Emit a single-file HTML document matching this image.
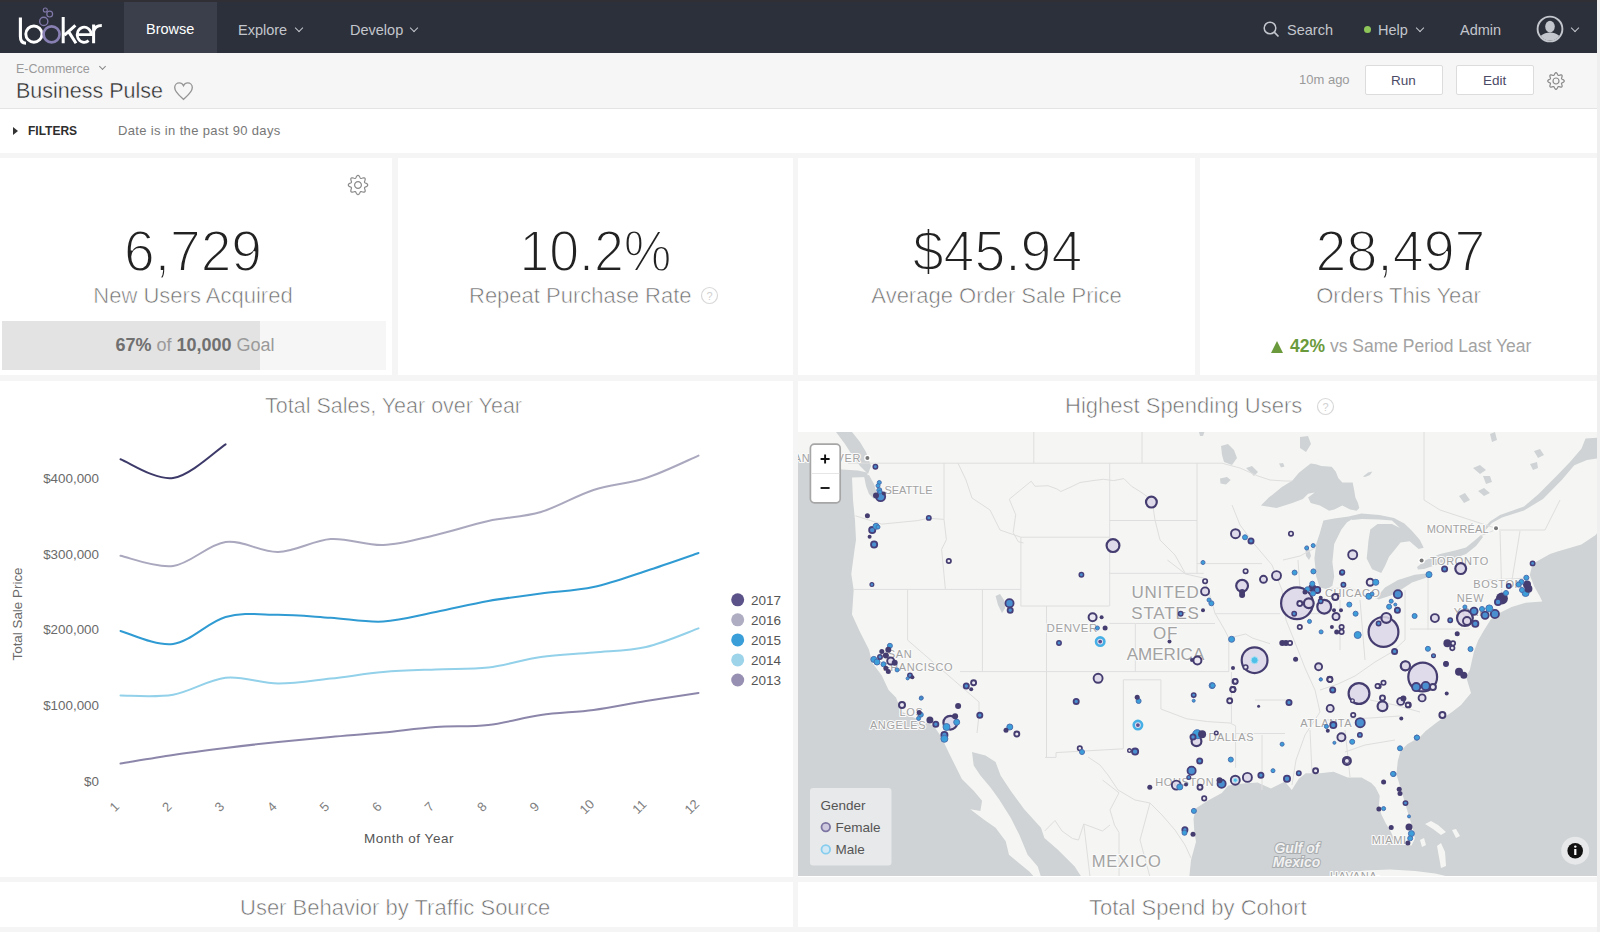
<!DOCTYPE html>
<html><head><meta charset="utf-8">
<style>
*{margin:0;padding:0;box-sizing:border-box}
html,body{width:1600px;height:932px;overflow:hidden;background:#f5f5f5;font-family:"Liberation Sans",sans-serif}
.a{position:absolute;white-space:nowrap}
#hdr{position:absolute;left:0;top:0;width:1597px;height:53px;background:#2c303b}
#rstrip{position:absolute;left:1597px;top:0;width:3px;height:932px;background:#efefef}
#tab{position:absolute;left:124px;top:2px;width:93px;height:51px;background:#3a3f4b}
.nav{color:#c3c6cc;font-size:14.5px}
.chev{position:absolute;width:6px;height:6px;border-right:1.8px solid currentColor;border-bottom:1.8px solid currentColor;transform:rotate(45deg)}
#sub{position:absolute;left:0;top:53px;width:1597px;height:56px;background:#f6f6f7;border-bottom:1px solid #e4e4e4}
#flt{position:absolute;left:0;top:109px;width:1597px;height:44px;background:#fff}
.tile{position:absolute;background:#fff}
.btn{position:absolute;background:#fff;border:1px solid #dcdcdc;border-radius:2px}
.num{color:#222;-webkit-text-stroke:1.8px #fff;font-size:58px;transform-origin:center}
.lbl{color:#707070;font-size:22px;-webkit-text-stroke:0.6px #fff}
.ttl{color:#6c6c6c;font-size:22px;-webkit-text-stroke:0.6px #fff}
</style></head><body>
<div id="hdr"></div>
<div class="a" style="left:0;top:0;width:1597px;height:2px;background:#312f36"></div>
<div id="tab"></div>
<div id="rstrip"></div>
<!-- logo -->
<svg class="a" style="left:0;top:0" width="115" height="53" viewBox="0 0 115 53">
  <g fill="none" stroke-linecap="butt">
  <circle cx="45.3" cy="10" r="2" stroke="#8078a8" stroke-width="1.1"/>
  <circle cx="49.7" cy="14.1" r="2.9" stroke="#8078a8" stroke-width="1.2"/>
  <circle cx="43.75" cy="21.4" r="4.1" stroke="#8078a8" stroke-width="1.4"/>
  <path d="M20.4 17.6 V36.5 C20.4 41 22.4 43.2 26 43.2" stroke="#fff" stroke-width="3.1"/>
  <circle cx="33.9" cy="34.1" r="8.1" stroke="#fff" stroke-width="2.9"/>
  <circle cx="51.6" cy="34.3" r="8.0" stroke="#8880b2" stroke-width="2.7"/>
  <path d="M63.2 16.9 V43.3 M75.4 25.4 L64.5 35.2 M68.6 31.6 L76 43.3" stroke="#fff" stroke-width="3"/>
  <path d="M77.2 34.6 H91.2 A7 7.6 0 1 0 88.6 40.6" stroke="#fff" stroke-width="2.8"/>
  <path d="M93.6 24.6 V43.3 M93.6 31.5 C94.5 27 97 25.5 101.8 25.5" stroke="#fff" stroke-width="3"/>
  </g>
</svg>
<div id="browse" class="a nav" style="left:146px;top:21px;color:#fff">Browse</div>
<div id="explore" class="a nav" style="left:238px;top:21.5px">Explore</div>
<div class="chev" style="left:296px;top:25px;color:#c3c6cc"></div>
<div id="develop" class="a nav" style="left:350px;top:21.5px">Develop</div>
<div class="chev" style="left:411px;top:25px;color:#c3c6cc"></div>
<svg class="a" style="left:1262px;top:20px" width="20" height="20" viewBox="0 0 20 20"><circle cx="8" cy="8" r="5.8" fill="none" stroke="#c3c6cc" stroke-width="1.5"/><line x1="12.2" y1="12.2" x2="16.5" y2="16.5" stroke="#c3c6cc" stroke-width="1.7"/></svg>
<div id="search" class="a nav" style="left:1287px;top:21.5px">Search</div>
<div class="a" style="left:1364px;top:26px;width:7px;height:7px;border-radius:50%;background:#8fc65a"></div>
<div id="help" class="a nav" style="left:1378px;top:21.5px">Help</div>
<div class="chev" style="left:1417px;top:25px;color:#c3c6cc"></div>
<div id="admin" class="a nav" style="left:1460px;top:21.5px">Admin</div>
<svg class="a" style="left:1536px;top:15px" width="28" height="28" viewBox="0 0 28 28">
  <defs><clipPath id="avc"><circle cx="14" cy="14" r="11.5"/></clipPath></defs>
  <circle cx="14" cy="14" r="12.4" fill="none" stroke="#c3c6cc" stroke-width="1.9"/>
  <g clip-path="url(#avc)" fill="#c3c6cc"><ellipse cx="14" cy="11.6" rx="4.8" ry="5.9"/><ellipse cx="14" cy="28" rx="12.5" ry="10.5"/></g>
</svg>
<div class="chev" style="left:1572px;top:25px;color:#c3c6cc"></div>

<div id="sub"></div>
<div id="ecom" class="a" style="left:16px;top:62px;font-size:12.5px;color:#9a9a9a">E-Commerce</div>
<div class="chev" style="left:100px;top:64px;width:5px;height:5px;border-width:0 1.3px 1.3px 0;color:#888"></div>
<div id="bp" class="a" style="left:16px;top:78.5px;font-size:21.5px;color:#2a2a2a;-webkit-text-stroke:0.4px #f6f6f7">Business Pulse</div>
<svg class="a" style="left:173px;top:81px" width="22" height="20" viewBox="0 0 22 20"><path d="M10.5 18.4 C7 15.2 1.7 11.2 1.7 6.6 C1.7 3.6 3.9 1.9 6.3 1.9 C8.3 1.9 9.7 3.1 10.5 4.7 C11.3 3.1 12.7 1.9 14.7 1.9 C17.1 1.9 19.3 3.6 19.3 6.6 C19.3 11.2 14 15.2 10.5 18.4 Z" fill="none" stroke="#959595" stroke-width="1.35"/></svg>
<div id="ago" class="a" style="left:1299px;top:72px;font-size:13px;color:#9a9a9a">10m ago</div>
<div class="btn" style="left:1365px;top:65px;width:78px;height:30px"></div>
<div id="run" class="a" style="left:1391px;top:73px;font-size:13.5px;color:#4b4a66">Run</div>
<div class="btn" style="left:1456px;top:65px;width:78px;height:30px"></div>
<div id="edit" class="a" style="left:1483px;top:73px;font-size:13.5px;color:#4b4a66">Edit</div>
<svg class="a" style="left:1546px;top:70.6px" width="20" height="20" viewBox="-10 -10 20 20" id="gear1"><path d="M8.30 0.00 L8.13 0.53 L7.66 1.01 L7.01 1.39 L6.35 1.70 L5.83 1.98 L5.54 2.30 L5.52 2.72 L5.69 3.29 L5.95 3.97 L6.13 4.70 L6.12 5.37 L5.87 5.87 L5.37 6.12 L4.70 6.13 L3.97 5.95 L3.29 5.69 L2.72 5.52 L2.30 5.54 L1.98 5.83 L1.70 6.35 L1.39 7.01 L1.01 7.66 L0.53 8.13 L0.00 8.30 L-0.53 8.13 L-1.01 7.66 L-1.39 7.01 L-1.70 6.35 L-1.98 5.83 L-2.30 5.54 L-2.72 5.52 L-3.29 5.69 L-3.97 5.95 L-4.70 6.13 L-5.37 6.12 L-5.87 5.87 L-6.12 5.37 L-6.13 4.70 L-5.95 3.97 L-5.69 3.29 L-5.52 2.72 L-5.54 2.30 L-5.83 1.98 L-6.35 1.70 L-7.01 1.39 L-7.66 1.01 L-8.13 0.53 L-8.30 0.00 L-8.13 -0.53 L-7.66 -1.01 L-7.01 -1.39 L-6.35 -1.70 L-5.83 -1.98 L-5.54 -2.30 L-5.52 -2.72 L-5.69 -3.29 L-5.95 -3.97 L-6.13 -4.70 L-6.12 -5.37 L-5.87 -5.87 L-5.37 -6.12 L-4.70 -6.13 L-3.97 -5.95 L-3.29 -5.69 L-2.72 -5.52 L-2.30 -5.54 L-1.98 -5.83 L-1.70 -6.35 L-1.39 -7.01 L-1.01 -7.66 L-0.53 -8.13 L-0.00 -8.30 L0.53 -8.13 L1.01 -7.66 L1.39 -7.01 L1.70 -6.35 L1.98 -5.83 L2.30 -5.54 L2.72 -5.52 L3.29 -5.69 L3.97 -5.95 L4.70 -6.13 L5.37 -6.12 L5.87 -5.87 L6.12 -5.37 L6.13 -4.70 L5.95 -3.97 L5.69 -3.29 L5.52 -2.72 L5.54 -2.30 L5.83 -1.98 L6.35 -1.70 L7.01 -1.39 L7.66 -1.01 L8.13 -0.53 Z M3.00 0 A3.00 3.00 0 1 0 -3.00 0 A3.00 3.00 0 1 0 3.00 0 Z" fill="none" stroke="#8a8a8a" stroke-width="1.2"/></svg>

<div id="flt"></div>
<div class="a" style="left:13px;top:127px;width:0;height:0;border-left:5px solid #333;border-top:4px solid transparent;border-bottom:4px solid transparent"></div>
<div id="filters" class="a" style="left:28px;top:124px;font-size:12px;font-weight:bold;color:#2e2e2e">FILTERS</div>
<div id="date" class="a" style="left:118px;top:123px;font-size:13px;letter-spacing:0.35px;color:#777">Date is in the past 90 days</div>

<!-- row 1 tiles -->
<div class="tile" style="left:0;top:158px;width:392px;height:217px"></div>
<div class="tile" style="left:398px;top:158px;width:395px;height:217px"></div>
<div class="tile" style="left:798px;top:158px;width:397px;height:217px"></div>
<div class="tile" style="left:1200px;top:158px;width:397px;height:217px"></div>
<!-- row 2 -->
<div class="tile" style="left:0;top:381px;width:793px;height:496px"></div>
<div class="tile" style="left:798px;top:381px;width:799px;height:496px"></div>
<!-- row 3 -->
<div class="tile" style="left:0;top:882px;width:793px;height:45px"></div>
<div class="tile" style="left:798px;top:882px;width:799px;height:45px"></div>

<!-- KPI 1 -->
<svg class="a" style="left:346.5px;top:173.8px" width="22" height="22" viewBox="-11 -11 22 22"><path d="M9.70 0.00 L9.51 0.62 L8.97 1.18 L8.24 1.64 L7.49 2.01 L6.89 2.34 L6.56 2.72 L6.52 3.22 L6.71 3.87 L6.98 4.67 L7.18 5.51 L7.16 6.28 L6.86 6.86 L6.28 7.16 L5.51 7.18 L4.67 6.98 L3.88 6.71 L3.22 6.52 L2.72 6.56 L2.34 6.89 L2.01 7.49 L1.64 8.24 L1.18 8.97 L0.62 9.51 L0.00 9.70 L-0.62 9.51 L-1.18 8.97 L-1.64 8.24 L-2.01 7.49 L-2.34 6.89 L-2.72 6.56 L-3.22 6.52 L-3.87 6.71 L-4.67 6.98 L-5.51 7.18 L-6.28 7.16 L-6.86 6.86 L-7.16 6.28 L-7.18 5.51 L-6.98 4.67 L-6.71 3.87 L-6.52 3.22 L-6.56 2.72 L-6.89 2.34 L-7.49 2.01 L-8.24 1.64 L-8.97 1.18 L-9.51 0.62 L-9.70 0.00 L-9.51 -0.62 L-8.97 -1.18 L-8.24 -1.64 L-7.49 -2.01 L-6.89 -2.34 L-6.56 -2.72 L-6.52 -3.22 L-6.71 -3.87 L-6.98 -4.67 L-7.18 -5.51 L-7.16 -6.28 L-6.86 -6.86 L-6.28 -7.16 L-5.51 -7.18 L-4.67 -6.98 L-3.88 -6.71 L-3.22 -6.52 L-2.72 -6.56 L-2.34 -6.89 L-2.01 -7.49 L-1.64 -8.24 L-1.18 -8.97 L-0.62 -9.51 L-0.00 -9.70 L0.62 -9.51 L1.18 -8.97 L1.64 -8.24 L2.01 -7.49 L2.34 -6.89 L2.72 -6.56 L3.22 -6.52 L3.88 -6.71 L4.67 -6.98 L5.51 -7.18 L6.28 -7.16 L6.86 -6.86 L7.16 -6.28 L7.18 -5.51 L6.98 -4.67 L6.71 -3.88 L6.52 -3.22 L6.56 -2.72 L6.89 -2.34 L7.49 -2.01 L8.24 -1.64 L8.97 -1.18 L9.51 -0.62 Z M3.40 0 A3.40 3.40 0 1 0 -3.40 0 A3.40 3.40 0 1 0 3.40 0 Z" fill="none" stroke="#8a8a8a" stroke-width="1.2"/></svg>
<div id="n1" class="a num" style="left:-3px;top:217px;width:392px;text-align:center;transform:scaleX(0.95)">6,729</div>
<div id="l1" class="a lbl" style="left:-3px;top:283px;width:392px;text-align:center">New Users Acquired</div>
<div class="a" style="left:2px;top:321px;width:384px;height:49px;background:#f6f6f6"></div>
<div class="a" style="left:2px;top:321px;width:258px;height:49px;background:#e3e3e3"></div>
<div id="goal" class="a" style="left:-1px;top:334.5px;width:392px;text-align:center;font-size:18px;color:#9a9a9a"><span style="color:#707070;font-weight:bold">67%</span> of <span style="color:#707070;font-weight:bold">10,000</span> Goal</div>

<!-- KPI 2 -->
<div id="n2" class="a num" style="left:398px;top:217px;width:395px;text-align:center;transform:scaleX(0.925)">10.2%</div>
<div id="l2" class="a lbl" style="left:469px;top:283px">Repeat Purchase Rate</div>
<svg class="a" style="left:700px;top:286px" width="19" height="19" viewBox="0 0 19 19"><circle cx="9.5" cy="9.5" r="8" fill="none" stroke="#d8d8d8" stroke-width="1.2"/><text x="9.5" y="13.5" font-size="11" text-anchor="middle" fill="#d0d0d0" font-family="Liberation Sans">?</text></svg>

<!-- KPI 3 -->
<div id="n3" class="a num" style="left:799px;top:217px;width:397px;text-align:center;transform:scaleX(0.955)">$45.94</div>
<div id="l3" class="a lbl" style="left:798px;top:283px;width:397px;text-align:center">Average Order Sale Price</div>

<!-- KPI 4 -->
<div id="n4" class="a num" style="left:1202px;top:217px;width:397px;text-align:center;transform:scaleX(0.957)">28,497</div>
<div id="l4" class="a lbl" style="left:1200px;top:283px;width:397px;text-align:center">Orders This Year</div>
<div id="cmp" class="a" style="left:1271px;top:335.5px;font-size:17.5px;color:#a3a3a3"><span style="display:inline-block;width:0;height:0;border-left:6.5px solid transparent;border-right:6.5px solid transparent;border-bottom:12px solid #6b9a3c;margin-right:7px;vertical-align:-1px"></span><span style="color:#6b9a3c;font-weight:bold">42%</span> vs Same Period Last Year</div>

<!-- titles -->
<div id="t1" class="a ttl" style="left:265px;top:394px;font-size:21.5px">Total Sales, Year over Year</div>
<div id="t2" class="a ttl" style="left:1065px;top:393px">Highest Spending Users</div>
<svg class="a" style="left:1316px;top:397px" width="19" height="19" viewBox="0 0 19 19"><circle cx="9.5" cy="9.5" r="8" fill="none" stroke="#d8d8d8" stroke-width="1.2"/><text x="9.5" y="13.5" font-size="11" text-anchor="middle" fill="#d0d0d0" font-family="Liberation Sans">?</text></svg>
<div id="t3" class="a ttl" style="left:240px;top:895px">User Behavior by Traffic Source</div>
<div id="t4" class="a ttl" style="left:1089px;top:895px">Total Spend by Cohort</div>

<svg class="a" style="left:0;top:381px" width="793" height="496" viewBox="0 381 793 496">
<g font-family="Liberation Sans" font-size="13.4" fill="#6a6a6a" text-anchor="end">
<text x="99" y="482.7">$400,000</text>
<text x="99" y="558.5">$300,000</text>
<text x="99" y="634.2">$200,000</text>
<text x="99" y="710.0">$100,000</text>
<text x="99" y="785.7">$0</text>
</g>
<text x="0" y="0" font-family="Liberation Sans" font-size="13.4" fill="#6a6a6a" text-anchor="middle" transform="translate(21.5 614) rotate(-90)">Total Sale Price</text>
<g font-family="Liberation Sans" font-size="13" fill="#808080" text-anchor="middle">
<text x="0" y="0" transform="translate(117.5 810) rotate(-45)">1</text>
<text x="0" y="0" transform="translate(170.0 810) rotate(-45)">2</text>
<text x="0" y="0" transform="translate(222.5 810) rotate(-45)">3</text>
<text x="0" y="0" transform="translate(275.0 810) rotate(-45)">4</text>
<text x="0" y="0" transform="translate(327.5 810) rotate(-45)">5</text>
<text x="0" y="0" transform="translate(380.0 810) rotate(-45)">6</text>
<text x="0" y="0" transform="translate(432.5 810) rotate(-45)">7</text>
<text x="0" y="0" transform="translate(485.0 810) rotate(-45)">8</text>
<text x="0" y="0" transform="translate(537.5 810) rotate(-45)">9</text>
<text x="0" y="0" transform="translate(590.0 810) rotate(-45)">10</text>
<text x="0" y="0" transform="translate(642.5 810) rotate(-45)">11</text>
<text x="0" y="0" transform="translate(695.0 810) rotate(-45)">12</text>
</g>
<text x="409" y="843" font-family="Liberation Sans" font-size="13.5" letter-spacing="0.5" fill="#555" text-anchor="middle">Month of Year</text>
<path d="M120.5 459.3 C129.3 462.4 155.5 480.5 173.1 478.0 C190.6 475.5 216.8 449.9 225.6 444.3" fill="none" stroke="#3d3a6a" stroke-width="2" stroke-linecap="round"/>
<path d="M120.5 555.8 C129.3 557.5 155.5 568.3 173.1 566.0 C190.6 563.7 208.1 544.3 225.6 542.0 C243.1 539.7 260.6 552.5 278.1 552.0 C295.7 551.5 313.2 540.2 330.7 539.0 C348.2 537.8 365.7 545.7 383.2 545.0 C400.8 544.3 418.3 539.0 435.8 535.0 C453.3 531.0 470.8 524.8 488.3 521.0 C505.9 517.2 523.4 517.2 540.9 512.0 C558.4 506.8 575.9 495.7 593.5 490.0 C611.0 484.3 628.5 483.7 646.0 478.0 C663.5 472.3 689.8 459.3 698.5 455.6" fill="none" stroke="#aaa8be" stroke-width="2" stroke-linecap="round"/>
<path d="M120.5 631.0 C129.3 633.2 155.5 646.3 173.1 644.0 C190.6 641.7 208.1 621.9 225.6 617.0 C243.1 612.1 260.6 614.7 278.1 614.8 C295.7 614.9 313.2 616.7 330.7 617.8 C348.2 618.9 365.7 622.5 383.2 621.5 C400.8 620.5 418.3 615.4 435.8 612.0 C453.3 608.6 470.8 604.1 488.3 601.0 C505.9 597.9 523.4 595.8 540.9 593.5 C558.4 591.2 575.9 590.8 593.5 587.0 C611.0 583.2 628.5 576.7 646.0 571.0 C663.5 565.3 689.8 556.0 698.5 553.0" fill="none" stroke="#2f9bd2" stroke-width="2" stroke-linecap="round"/>
<path d="M120.5 695.5 C129.3 695.4 155.5 697.7 173.1 694.7 C190.6 691.8 208.1 679.7 225.6 677.8 C243.1 675.9 260.6 683.4 278.1 683.5 C295.7 683.6 313.2 680.5 330.7 678.6 C348.2 676.7 365.7 673.5 383.2 672.0 C400.8 670.5 418.3 670.1 435.8 669.4 C453.3 668.6 470.8 669.6 488.3 667.5 C505.9 665.4 523.4 659.5 540.9 657.0 C558.4 654.5 575.9 654.2 593.5 652.5 C611.0 650.8 628.5 651.0 646.0 647.0 C663.5 643.0 689.8 631.5 698.5 628.4" fill="none" stroke="#92d1e9" stroke-width="2" stroke-linecap="round"/>
<path d="M120.5 763.5 C129.3 762.1 155.5 757.6 173.1 755.0 C190.6 752.4 208.1 750.2 225.6 748.0 C243.1 745.8 260.6 743.8 278.1 742.0 C295.7 740.2 313.2 738.6 330.7 737.0 C348.2 735.4 365.7 734.2 383.2 732.5 C400.8 730.8 418.3 728.2 435.8 727.0 C453.3 725.8 470.8 727.0 488.3 725.0 C505.9 723.0 523.4 717.5 540.9 715.0 C558.4 712.5 575.9 712.3 593.5 710.0 C611.0 707.7 628.5 703.8 646.0 701.0 C663.5 698.2 689.8 694.3 698.5 693.0" fill="none" stroke="#8c86aa" stroke-width="2" stroke-linecap="round"/>
<circle cx="737.7" cy="599.8" r="6.5" fill="#5b5289"/>
<text x="751" y="604.8" font-family="Liberation Sans" font-size="13.5" fill="#555">2017</text>
<circle cx="737.7" cy="619.8" r="6.5" fill="#aeadc2"/>
<text x="751" y="624.8" font-family="Liberation Sans" font-size="13.5" fill="#555">2016</text>
<circle cx="737.7" cy="639.9" r="6.5" fill="#3a9fd8"/>
<text x="751" y="644.9" font-family="Liberation Sans" font-size="13.5" fill="#555">2015</text>
<circle cx="737.7" cy="659.9" r="6.5" fill="#9dd4ea"/>
<text x="751" y="664.9" font-family="Liberation Sans" font-size="13.5" fill="#555">2014</text>
<circle cx="737.7" cy="680.0" r="6.5" fill="#9890b2"/>
<text x="751" y="685.0" font-family="Liberation Sans" font-size="13.5" fill="#555">2013</text>
</svg>
<svg class="a" style="left:798px;top:432px" width="799" height="444" viewBox="798 432 799 444">
<rect x="798" y="432" width="799" height="445" fill="#f5f6f3"/>
<polygon points="798.0,461.0 815.0,463.0 830.0,466.0 842.0,469.5 858.0,470.5 867.0,472.5 868.0,477.0 852.0,477.5 853.0,500.0 855.0,520.0 856.0,540.0 854.5,550.0 851.3,574.0 853.7,590.0 852.0,614.4 859.3,630.5 869.0,649.8 872.2,662.7 881.8,675.5 888.6,690.0 896.0,697.5 901.5,711.5 912.0,716.8 925.0,722.2 933.6,725.4 940.0,735.0 944.4,743.6 949.7,754.4 956.8,768.8 961.9,779.0 973.7,790.7 982.1,800.8 980.4,811.0 970.3,809.3 983.8,819.4 995.6,827.8 1005.7,841.3 1009.0,854.7 1019.2,863.2 1029.3,871.6 1034.3,877.0 798.0,877.0" fill="#cfd3d5"/>
<polygon points="972.0,752.0 985.5,755.4 995.6,762.0 1000.6,775.6 1010.7,790.7 1024.2,809.3 1041.0,827.8 1044.4,837.9 1057.9,849.7 1074.7,866.5 1081.5,877.0 1041.0,877.0 1037.7,866.5 1027.6,854.7 1019.2,834.5 1010.7,817.7 999.0,799.2 990.5,787.4 980.4,775.6 973.7,765.5" fill="#cfd3d5"/>
<polygon points="1189.3,877.0 1191.0,860.0 1196.0,841.8 1194.3,831.5 1193.5,818.6 1196.0,808.3 1208.0,800.6 1221.8,792.9 1228.2,785.6 1243.0,783.4 1257.6,782.6 1270.9,788.5 1284.9,781.6 1291.8,790.0 1298.8,778.8 1305.8,773.2 1319.7,773.2 1333.7,771.8 1347.6,777.4 1361.6,777.4 1371.3,783.0 1375.4,787.2 1379.7,795.7 1378.9,806.0 1381.4,814.6 1385.7,823.2 1390.9,831.8 1394.3,840.3 1401.2,844.6 1411.5,845.5 1414.9,838.6 1413.2,830.0 1408.0,812.9 1402.9,795.7 1397.7,778.6 1396.4,774.6 1397.8,760.7 1400.6,750.9 1407.6,743.9 1420.0,737.0 1425.7,731.0 1437.6,721.7 1452.0,712.0 1461.0,705.0 1471.0,693.0 1466.0,676.4 1469.8,670.0 1474.0,651.6 1478.1,640.5 1483.7,630.7 1490.7,619.5 1500.5,612.6 1511.6,607.0 1525.6,602.8 1542.3,601.4 1539.5,595.8 1534.0,586.0 1529.8,574.9 1532.6,563.7 1550.0,554.0 1557.5,551.6 1581.4,544.4 1595.7,535.0 1597.0,533.0 1597.0,877.0" fill="#cfd3d5"/>
<polygon points="1500.0,515.0 1524.0,506.5 1538.3,494.2 1557.5,475.0 1570.0,462.0 1581.4,448.7 1585.5,438.6 1597.0,437.8 1597.0,458.4 1587.0,460.0 1574.3,465.2 1562.0,479.8 1543.0,499.0 1524.0,510.5 1502.0,517.5 1492.0,523.0 1482.0,534.0 1480.0,533.0 1490.0,521.5" fill="#cfd3d5"/>
<polygon points="1260.9,505.5 1268.8,497.6 1281.9,487.1 1292.4,480.6 1298.9,472.7 1305.5,467.4 1310.7,463.5 1316.0,464.2 1321.3,466.1 1331.7,466.8 1335.7,471.4 1338.3,477.9 1342.3,482.5 1352.7,482.5 1354.1,489.7 1355.4,497.6 1358.0,502.9 1359.3,508.1 1356.7,510.7 1350.1,509.4 1342.3,505.5 1334.4,509.4 1329.1,510.7 1319.9,505.5 1310.7,502.9 1308.1,497.6 1314.7,492.4 1308.1,493.7 1302.9,498.9 1292.4,502.9 1284.5,505.5 1276.6,508.1 1268.8,506.8" fill="#cfd3d5"/>
<polygon points="1323.4,520.4 1319.8,533.2 1316.2,544.0 1314.4,558.5 1316.2,576.6 1319.8,587.5 1327.0,589.3 1332.4,585.7 1334.2,576.6 1332.4,562.0 1334.2,544.0 1341.4,529.6 1346.8,522.4 1352.3,519.0 1348.7,516.5 1334.2,518.5" fill="#cfd3d5"/>
<polygon points="1348.7,516.5 1361.4,513.4 1379.5,515.0 1394.0,518.0 1404.4,523.5 1412.1,531.0 1419.9,540.0 1423.7,547.7 1418.6,549.0 1409.6,541.2 1400.5,542.5 1395.4,549.0 1389.0,556.7 1385.0,566.0 1381.2,572.9 1372.1,569.3 1366.7,558.5 1368.5,540.3 1370.3,529.6 1377.5,524.0 1392.0,524.0 1400.0,528.0 1392.0,520.5 1379.0,519.5 1362.0,519.0 1352.3,520.0" fill="#cfd3d5"/>
<polygon points="1376.0,598.0 1385.0,587.6 1398.0,580.0 1414.7,574.7 1426.0,573.4 1427.6,577.3 1412.0,582.4 1400.5,590.0 1391.5,595.3 1378.6,599.5" fill="#cfd3d5"/>
<polygon points="1417.0,567.0 1426.0,560.0 1440.0,554.0 1455.0,550.5 1466.0,547.5 1474.0,541.0 1481.0,535.0 1483.0,537.0 1476.0,546.0 1466.0,554.0 1450.0,560.0 1436.0,565.0 1424.0,569.0 1418.0,569.5" fill="#cfd3d5"/>
<polygon points="1305.0,546.0 1308.0,545.0 1311.0,556.0 1309.0,560.0 1306.0,556.0" fill="#cfd3d5"/>
<polygon points="995.6,596.0 1000.0,594.0 1004.0,600.0 1005.3,608.0 1002.0,613.0 998.0,605.0" fill="#cfd3d5"/>
<polygon points="1221.0,446.0 1228.0,444.0 1234.0,450.0 1237.0,458.0 1232.0,465.0 1224.0,462.0 1222.0,455.0" fill="#cfd3d5"/>
<polygon points="1246.0,468.0 1252.0,466.0 1258.0,472.0 1254.0,476.0" fill="#cfd3d5"/>
<polygon points="1300.0,437.0 1308.0,436.0 1311.0,444.0 1306.0,452.0 1300.0,448.0" fill="#cfd3d5"/>
<polygon points="1220.0,478.5 1227.0,477.0 1230.7,480.0 1226.0,484.5 1220.5,483.5" fill="#cfd3d5"/>
<polygon points="1279.0,463.5 1283.0,463.0 1284.5,466.5 1281.0,467.4" fill="#cfd3d5"/>
<polygon points="1363.0,476.6 1368.0,472.5 1372.4,471.4 1370.0,475.0 1365.0,477.0" fill="#cfd3d5"/>
<polygon points="1199.0,432.0 1204.4,432.0 1203.0,436.0 1200.0,436.0" fill="#cfd3d5"/>
<polygon points="1473.0,468.0 1480.0,465.0 1486.0,470.0 1480.0,474.0" fill="#cfd3d5"/>
<polygon points="1478.0,491.0 1484.0,488.0 1490.0,493.0 1484.0,496.0" fill="#cfd3d5"/>
<polygon points="1534.0,451.0 1540.0,449.0 1544.0,455.0 1538.0,458.0" fill="#cfd3d5"/>
<polygon points="1483.0,476.0 1490.0,476.0 1492.0,482.0 1486.0,484.0" fill="#cfd3d5"/>
<polygon points="1459.0,496.0 1465.0,493.0 1470.0,500.0 1464.0,503.0" fill="#cfd3d5"/>
<polygon points="1490.0,434.0 1495.0,432.0 1497.0,440.0 1492.0,442.0" fill="#cfd3d5"/>
<polygon points="1530.0,464.0 1537.0,462.0 1538.0,468.0 1533.0,470.0" fill="#cfd3d5"/>
<polygon points="836.0,432.0 852.0,432.0 860.0,442.0 866.0,452.0 871.0,466.0 868.0,474.0 860.0,466.0 852.0,455.0 845.0,444.0" fill="#cfd3d5"/>
<polygon points="864.0,476.0 869.0,475.0 874.0,484.0 877.0,494.0 874.0,499.0 869.0,494.0 866.0,486.0" fill="#cfd3d5"/>
<polygon points="1330.0,877.0 1345.0,873.0 1365.0,870.5 1390.0,869.5 1415.0,871.0 1435.0,873.5 1450.0,877.0" fill="#f5f6f3"/>
<polygon points="1425.0,824.0 1431.0,821.0 1438.0,825.0 1446.0,832.0 1441.0,835.0 1433.0,829.0" fill="#f5f6f3"/>
<polygon points="1437.0,846.0 1441.0,843.0 1445.0,852.0 1446.0,866.0 1441.0,868.0 1439.0,857.0" fill="#f5f6f3"/>
<polygon points="1452.0,830.0 1456.0,829.0 1460.0,836.0 1456.0,838.0" fill="#f5f6f3"/>
<polygon points="1420.0,840.0 1424.0,838.0 1426.0,845.0 1422.0,847.0" fill="#f5f6f3"/>
<g fill="none" stroke="#dedede" stroke-width="1">
<polyline points="848.0,463.2 1222.0,463.2 1240.0,468.0 1258.0,476.0 1270.0,480.0 1285.0,481.0 1292.0,481.0"/>
<polyline points="1033.8,432.0 1033.8,463.2"/>
<polyline points="1142.0,432.0 1142.0,463.2"/>
<polyline points="855.4,515.8 881.8,524.1 917.7,520.6 928.4,518.2 944.0,519.4"/>
<polyline points="944.0,463.2 944.0,519.4 946.4,539.7 941.6,549.3 945.4,589.4"/>
<polyline points="853.7,589.4 1020.9,589.4"/>
<polyline points="907.6,589.4 907.6,640.1 979.0,702.0 979.0,715.0 977.0,733.0"/>
<polyline points="982.4,589.4 982.4,671.6"/>
<polyline points="958.0,463.2 966.0,480.0 972.0,498.0 990.0,510.0 1000.0,530.0 1020.9,537.2"/>
<polyline points="1020.9,537.2 1109.7,537.2"/>
<polyline points="1020.9,537.2 1020.9,606.0"/>
<polyline points="1020.7,606.0 1109.3,606.0"/>
<polyline points="1109.7,463.2 1109.7,606.0"/>
<polyline points="1109.7,520.5 1197.0,520.5"/>
<polyline points="1109.3,573.3 1203.7,573.3"/>
<polyline points="1109.3,623.4 1135.0,623.4"/>
<polyline points="1046.5,606.0 1046.5,757.4"/>
<polyline points="960.0,671.6 1229.0,671.6"/>
<polyline points="1135.3,623.5 1135.3,671.6"/>
<polyline points="1135.3,623.5 1215.0,623.5"/>
<polyline points="1045.0,757.4 1056.0,757.4 1056.0,752.6 1123.3,748.8"/>
<polyline points="1123.3,679.8 1123.3,748.8"/>
<polyline points="1123.3,679.8 1160.9,679.8 1160.9,709.0 1186.7,718.8 1207.7,721.6 1230.0,723.0 1235.6,725.8 1235.6,767.7"/>
<polyline points="1231.4,672.0 1231.4,723.0"/>
<polyline points="1235.6,733.5 1285.0,733.5"/>
<polyline points="1228.8,638.1 1228.8,671.6"/>
<polyline points="1228.8,638.1 1245.6,634.0 1252.6,638.1 1270.0,643.7"/>
<polyline points="1197.0,463.2 1197.0,573.3"/>
<polyline points="1197.0,563.6 1262.0,563.6"/>
<polyline points="1167.4,560.0 1185.6,574.0 1203.7,578.1 1210.7,597.7 1214.9,613.0 1224.6,629.8 1228.8,638.1"/>
<polyline points="1214.9,613.7 1280.0,613.7"/>
<polyline points="1031.2,481.2 1009.3,499.2 1015.7,514.7 1013.2,532.7 1018.3,541.7 1023.5,543.0"/>
<polyline points="1031.2,481.2 1035.0,486.3 1048.0,485.7 1057.0,489.0 1060.8,491.5 1072.4,486.3 1080.0,482.5 1093.0,480.6 1103.3,479.3 1113.6,480.6 1123.9,478.6 1131.6,486.3 1140.0,491.5 1152.0,500.0 1155.0,520.0 1160.0,540.0 1175.0,555.0 1185.6,574.0"/>
<polyline points="1232.0,505.0 1240.0,525.0 1255.0,545.0 1272.0,565.0 1282.0,590.0 1286.0,620.0 1296.0,645.0 1305.0,668.0 1315.0,690.0 1320.0,712.0 1305.0,735.0 1296.0,760.0 1292.0,785.0"/>
<polyline points="1320.0,690.0 1338.0,684.0 1355.0,676.0 1375.0,662.0 1392.0,652.0 1405.0,640.0"/>
<polyline points="1325.0,720.0 1370.0,718.0 1400.0,716.0"/>
<polyline points="1283.0,560.0 1300.0,556.0 1315.0,548.0"/>
<polyline points="1328.8,588.5 1350.0,588.0 1376.0,598.0"/>
<polyline points="1340.0,600.0 1340.0,650.0"/>
<polyline points="1360.0,600.0 1365.0,660.0"/>
<polyline points="1405.0,590.0 1405.0,640.0"/>
<polyline points="1410.0,629.0 1470.0,629.0"/>
<polyline points="1428.0,575.0 1428.0,630.0"/>
<polyline points="1480.0,536.0 1495.0,530.0 1545.0,530.0 1550.0,520.0 1560.0,500.0"/>
<polyline points="1500.0,531.0 1502.0,600.0"/>
<polyline points="1520.0,531.0 1512.0,580.0"/>
<polyline points="1485.0,580.0 1530.0,578.0"/>
<polyline points="1310.0,730.0 1312.0,773.0"/>
<polyline points="1345.0,730.0 1350.0,777.0"/>
<polyline points="1370.0,700.0 1395.0,705.0 1420.0,712.0"/>
<polyline points="1395.0,740.0 1365.0,745.0 1345.0,752.0"/>
<polyline points="1424.0,432.0 1424.0,500.0 1440.0,510.0 1495.0,528.0"/>
<polyline points="1298.0,560.0 1300.0,590.0"/>
<polyline points="1300.0,613.7 1330.0,613.7"/>
<polyline points="1255.0,700.0 1290.0,700.0"/>
<polyline points="1262.0,735.0 1262.0,790.0"/>
<polyline points="1088.0,757.0 1100.0,765.0 1108.0,775.0 1118.0,790.0 1135.0,800.0 1150.0,803.0 1162.0,815.0 1175.0,830.0 1185.0,845.0 1191.0,858.0"/>
<polyline points="1102.5,780.0 1119.0,792.8 1110.0,810.0 1114.5,825.0 1119.0,832.5 1119.0,877.0"/>
<polyline points="1044.7,831.0 1055.0,820.5 1062.0,831.0 1072.5,838.5 1078.5,840.0 1083.8,824.0 1102.5,831.0 1110.0,825.0"/>
<polyline points="1083.8,824.0 1090.0,877.0"/>
<polyline points="1150.0,803.0 1140.0,840.0 1150.0,877.0"/>
</g>
<g font-family="Liberation Sans" fill="#a2a2a2" stroke="#fafafa" stroke-width="2.2" paint-order="stroke" stroke-linejoin="round">
<text x="861.0" y="462.0" font-size="11.0" text-anchor="end" letter-spacing="0.6">VANCOUVER</text>
<text x="884.4" y="493.5" font-size="11.0" text-anchor="start" letter-spacing="0.0">SEATTLE</text>
<text x="900.0" y="657.5" font-size="11.0" text-anchor="middle" letter-spacing="0.6">SAN</text>
<text x="918.0" y="670.8" font-size="11.0" text-anchor="middle" letter-spacing="0.6">FRANCISCO</text>
<text x="911.5" y="716.0" font-size="11.0" text-anchor="middle" letter-spacing="0.6">LOS</text>
<text x="898.0" y="729.0" font-size="11.0" text-anchor="middle" letter-spacing="0.6">ANGELES</text>
<text x="1046.5" y="632.0" font-size="11.5" text-anchor="start" letter-spacing="0.6">DENVER</text>
<text x="1165.5" y="597.8" font-size="17.0" text-anchor="middle" letter-spacing="0.8">UNITED</text>
<text x="1165.5" y="618.7" font-size="17.0" text-anchor="middle" letter-spacing="0.8">STATES</text>
<text x="1165.5" y="638.9" font-size="17.0" text-anchor="middle" letter-spacing="0.8">OF</text>
<text x="1165.5" y="659.9" font-size="17.0" text-anchor="middle" letter-spacing="0.0">AMERICA</text>
<text x="1324.9" y="596.5" font-size="11.0" text-anchor="start" letter-spacing="0.6">CHICAGO</text>
<text x="1208.4" y="741.3" font-size="11.0" text-anchor="start" letter-spacing="0.6">DALLAS</text>
<text x="1155.3" y="786.0" font-size="11.0" text-anchor="start" letter-spacing="0.6">HOUSTON</text>
<text x="1300.2" y="727.3" font-size="11.0" text-anchor="start" letter-spacing="0.6">ATLANTA</text>
<text x="1371.8" y="843.9" font-size="11.0" text-anchor="start" letter-spacing="0.6">MIAMI</text>
<text x="1330.0" y="880.0" font-size="11.0" text-anchor="start" letter-spacing="0.6">HAVANA</text>
<text x="1126.7" y="867.2" font-size="16.5" text-anchor="middle" letter-spacing="0.8">MEXICO</text>
<text x="1430.0" y="564.5" font-size="11.0" text-anchor="start" letter-spacing="0.6">TORONTO</text>
<text x="1426.7" y="533.3" font-size="11.0" text-anchor="start" letter-spacing="0.1">MONTRÉAL</text>
<text x="1473.3" y="588.2" font-size="11.0" text-anchor="start" letter-spacing="0.6">BOSTON</text>
<text x="1470.5" y="602.1" font-size="11.0" text-anchor="middle" letter-spacing="0.6">NEW</text>
<text x="1470.5" y="615.5" font-size="11.0" text-anchor="middle" letter-spacing="0.6">YORK</text>
</g>
<circle cx="867.4" cy="458.0" r="3.2" fill="#fff"/><circle cx="867.4" cy="458.0" r="2" fill="#777"/>
<circle cx="1421.6" cy="560.6" r="3.2" fill="#fff"/><circle cx="1421.6" cy="560.6" r="2" fill="#777"/>
<circle cx="1496.0" cy="528.3" r="3.2" fill="#fff"/><circle cx="1496.0" cy="528.3" r="2" fill="#777"/>
<circle cx="1378.0" cy="878.0" r="3.2" fill="#fff"/><circle cx="1378.0" cy="878.0" r="2" fill="#777"/>
<g font-family="Liberation Sans" font-style="italic" font-weight="bold" font-size="14" fill="#f2f2f2" stroke="#a9adb0" stroke-width="2" paint-order="stroke" text-anchor="middle"><text x="1297" y="852.5">Gulf of</text><text x="1296.5" y="867">Mexico</text></g>
<circle cx="1297.0" cy="603.3" r="15.9" fill="#dcd6e8" fill-opacity="0.85" stroke="#453d70" stroke-width="2.2"/>
<circle cx="1383.5" cy="631.9" r="14.9" fill="#dcd6e8" fill-opacity="0.85" stroke="#453d70" stroke-width="2.2"/>
<circle cx="1422.7" cy="677.0" r="14.4" fill="#dcd6e8" fill-opacity="0.85" stroke="#453d70" stroke-width="2.2"/>
<circle cx="1254.6" cy="660.2" r="12.9" fill="#dcd6e8" fill-opacity="0.85" stroke="#453d70" stroke-width="2.2"/>
<circle cx="1359.0" cy="693.5" r="10.4" fill="#dcd6e8" fill-opacity="0.85" stroke="#453d70" stroke-width="2.2"/>
<circle cx="1464.9" cy="618.1" r="7.9" fill="#dcd6e8" fill-opacity="0.85" stroke="#453d70" stroke-width="2.2"/>
<circle cx="950.3" cy="722.7" r="6.9" fill="#dcd6e8" fill-opacity="0.85" stroke="#453d70" stroke-width="2.2"/>
<circle cx="1324.2" cy="606.7" r="6.9" fill="#dcd6e8" fill-opacity="0.85" stroke="#453d70" stroke-width="2.2"/>
<circle cx="1113.0" cy="545.6" r="6.4" fill="#dcd6e8" fill-opacity="0.85" stroke="#453d70" stroke-width="2.2"/>
<circle cx="1242.1" cy="585.8" r="5.9" fill="#dcd6e8" fill-opacity="0.85" stroke="#453d70" stroke-width="2.2"/>
<circle cx="1151.4" cy="502.1" r="5.4" fill="#dcd6e8" fill-opacity="0.85" stroke="#453d70" stroke-width="2.2"/>
<circle cx="1460.7" cy="568.6" r="5.4" fill="#dcd6e8" fill-opacity="0.85" stroke="#453d70" stroke-width="2.2"/>
<circle cx="1308.8" cy="603.3" r="4.9" fill="#dcd6e8" fill-opacity="0.85" stroke="#453d70" stroke-width="2.2"/>
<circle cx="1386.3" cy="617.9" r="4.9" fill="#dcd6e8" fill-opacity="0.85" stroke="#453d70" stroke-width="2.2"/>
<circle cx="1501.9" cy="598.6" r="6.0" fill="#453d70"/>
<circle cx="1382.5" cy="706.3" r="4.9" fill="#dcd6e8" fill-opacity="0.85" stroke="#453d70" stroke-width="2.2"/>
<circle cx="1196.5" cy="741.2" r="4.9" fill="#dcd6e8" fill-opacity="0.85" stroke="#453d70" stroke-width="2.2"/>
<circle cx="880.6" cy="496.6" r="4.6" fill="#4a8fd0" stroke="#463f7a" stroke-width="1.8"/>
<circle cx="1100.2" cy="641.6" r="4.2" fill="#e3dff0" stroke="#46b0e6" stroke-width="2.6"/>
<circle cx="1100.2" cy="641.6" r="1.9" fill="#5e4f8e"/>
<circle cx="1098.1" cy="678.3" r="4.5" fill="#dcd6e8" fill-opacity="0.85" stroke="#453d70" stroke-width="1.9"/>
<circle cx="1276.5" cy="575.6" r="4.5" fill="#dcd6e8" fill-opacity="0.85" stroke="#453d70" stroke-width="1.9"/>
<circle cx="1235.5" cy="533.7" r="4.5" fill="#dcd6e8" fill-opacity="0.85" stroke="#453d70" stroke-width="1.9"/>
<circle cx="1352.7" cy="554.7" r="4.5" fill="#dcd6e8" fill-opacity="0.85" stroke="#453d70" stroke-width="1.9"/>
<circle cx="1405.1" cy="666.0" r="4.5" fill="#dcd6e8" fill-opacity="0.85" stroke="#453d70" stroke-width="1.9"/>
<circle cx="1405.5" cy="665.7" r="4.5" fill="#dcd6e8" fill-opacity="0.85" stroke="#453d70" stroke-width="1.9"/>
<circle cx="1360.2" cy="722.7" r="4.6" fill="#4a8fd0" stroke="#463f7a" stroke-width="1.8"/>
<circle cx="1137.9" cy="725.1" r="4.2" fill="#e3dff0" stroke="#46b0e6" stroke-width="2.6"/>
<circle cx="1137.9" cy="725.1" r="1.9" fill="#5e4f8e"/>
<circle cx="1176.3" cy="785.1" r="4.5" fill="#dcd6e8" fill-opacity="0.85" stroke="#453d70" stroke-width="1.9"/>
<circle cx="1235.3" cy="780.2" r="4.5" fill="#dcd6e8" fill-opacity="0.85" stroke="#453d70" stroke-width="1.9"/>
<circle cx="1247.4" cy="777.4" r="4.5" fill="#dcd6e8" fill-opacity="0.85" stroke="#453d70" stroke-width="1.9"/>
<circle cx="1009.5" cy="603.3" r="4.1" fill="#4a8fd0" stroke="#463f7a" stroke-width="1.8"/>
<circle cx="1092.6" cy="617.2" r="4.0" fill="#ebe8f2" stroke="#453d70" stroke-width="2.0"/>
<circle cx="1205.1" cy="591.4" r="4.0" fill="#dcd6e8" fill-opacity="0.85" stroke="#453d70" stroke-width="1.9"/>
<circle cx="1197.4" cy="660.5" r="4.0" fill="#ebe8f2" stroke="#453d70" stroke-width="2.0"/>
<circle cx="1397.9" cy="594.2" r="4.1" fill="#4a8fd0" stroke="#463f7a" stroke-width="1.8"/>
<circle cx="1467.0" cy="621.0" r="4.0" fill="#dcd6e8" fill-opacity="0.85" stroke="#453d70" stroke-width="1.9"/>
<circle cx="1494.9" cy="614.0" r="4.1" fill="#4a8fd0" stroke="#463f7a" stroke-width="1.8"/>
<circle cx="1434.9" cy="618.1" r="4.0" fill="#dcd6e8" fill-opacity="0.85" stroke="#453d70" stroke-width="1.9"/>
<circle cx="1416.2" cy="687.1" r="4.1" fill="#4a8fd0" stroke="#463f7a" stroke-width="1.8"/>
<circle cx="1425.7" cy="686.0" r="4.1" fill="#4a8fd0" stroke="#463f7a" stroke-width="1.8"/>
<circle cx="1341.4" cy="737.2" r="4.0" fill="#dcd6e8" fill-opacity="0.85" stroke="#453d70" stroke-width="1.9"/>
<circle cx="1346.9" cy="760.9" r="4.0" fill="#ebe8f2" stroke="#453d70" stroke-width="2.0"/>
<circle cx="1346.9" cy="760.9" r="2.5" fill="none" stroke="#453d70" stroke-width="1.2"/>
<circle cx="1197.2" cy="734.2" r="4.5" fill="#3d9fda" stroke="#4b6fb0" stroke-width="1"/>
<circle cx="1191.6" cy="770.7" r="4.1" fill="#4a8fd0" stroke="#463f7a" stroke-width="1.8"/>
<circle cx="1221.6" cy="783.7" r="4.1" fill="#4a8fd0" stroke="#463f7a" stroke-width="1.8"/>
<circle cx="890.7" cy="661.0" r="3.5" fill="#dcd6e8" fill-opacity="0.85" stroke="#453d70" stroke-width="1.9"/>
<circle cx="1263.5" cy="579.3" r="3.5" fill="#dcd6e8" fill-opacity="0.85" stroke="#453d70" stroke-width="1.9"/>
<circle cx="1336.0" cy="616.5" r="3.5" fill="#dcd6e8" fill-opacity="0.85" stroke="#453d70" stroke-width="1.9"/>
<circle cx="1370.2" cy="582.3" r="3.5" fill="#ebe8f2" stroke="#453d70" stroke-width="2.0"/>
<circle cx="1318.6" cy="666.7" r="3.5" fill="#dcd6e8" fill-opacity="0.85" stroke="#453d70" stroke-width="1.9"/>
<circle cx="1474.0" cy="611.2" r="3.6" fill="#4a8fd0" stroke="#463f7a" stroke-width="1.8"/>
<circle cx="1485.1" cy="615.3" r="3.6" fill="#4a8fd0" stroke="#463f7a" stroke-width="1.8"/>
<circle cx="1422.1" cy="697.9" r="3.5" fill="#dcd6e8" fill-opacity="0.85" stroke="#453d70" stroke-width="1.9"/>
<circle cx="1400.7" cy="701.4" r="3.5" fill="#dcd6e8" fill-opacity="0.85" stroke="#453d70" stroke-width="1.9"/>
<circle cx="1330.2" cy="708.4" r="3.5" fill="#dcd6e8" fill-opacity="0.85" stroke="#453d70" stroke-width="1.9"/>
<circle cx="872.2" cy="530.1" r="3.1" fill="#4a8fd0" stroke="#463f7a" stroke-width="1.8"/>
<circle cx="874.1" cy="544.5" r="3.1" fill="#4a8fd0" stroke="#463f7a" stroke-width="1.8"/>
<circle cx="902.0" cy="705.0" r="3.0" fill="#ebe8f2" stroke="#453d70" stroke-width="2.0"/>
<circle cx="946.5" cy="727.0" r="3.5" fill="#3d9fda" stroke="#4b6fb0" stroke-width="1"/>
<circle cx="944.4" cy="735.0" r="3.1" fill="#4a8fd0" stroke="#463f7a" stroke-width="1.8"/>
<circle cx="944.4" cy="738.8" r="3.5" fill="#3d9fda" stroke="#4b6fb0" stroke-width="1"/>
<circle cx="1312.3" cy="587.9" r="4.0" fill="#453d70"/>
<circle cx="1317.2" cy="590.0" r="3.1" fill="#4a8fd0" stroke="#463f7a" stroke-width="1.8"/>
<circle cx="1335.3" cy="597.0" r="3.0" fill="#ebe8f2" stroke="#453d70" stroke-width="2.0"/>
<circle cx="1357.7" cy="635.0" r="3.5" fill="#3d9fda" stroke="#4b6fb0" stroke-width="1"/>
<circle cx="1527.0" cy="584.6" r="4.0" fill="#453d70"/>
<circle cx="1525.6" cy="593.0" r="3.5" fill="#3d9fda" stroke="#4b6fb0" stroke-width="1"/>
<circle cx="1528.4" cy="588.8" r="4.0" fill="#453d70"/>
<circle cx="1498.0" cy="602.0" r="3.1" fill="#4a8fd0" stroke="#463f7a" stroke-width="1.8"/>
<circle cx="1489.3" cy="608.4" r="3.5" fill="#3d9fda" stroke="#4b6fb0" stroke-width="1"/>
<circle cx="1475.3" cy="623.7" r="3.1" fill="#4a8fd0" stroke="#463f7a" stroke-width="1.8"/>
<circle cx="1447.4" cy="643.3" r="4.0" fill="#453d70"/>
<circle cx="1432.9" cy="687.1" r="3.0" fill="#ebe8f2" stroke="#453d70" stroke-width="2.0"/>
<circle cx="1459.0" cy="671.7" r="4.0" fill="#453d70"/>
<circle cx="1442.4" cy="715.0" r="3.0" fill="#ebe8f2" stroke="#453d70" stroke-width="2.0"/>
<circle cx="1333.3" cy="725.1" r="3.1" fill="#4a8fd0" stroke="#463f7a" stroke-width="1.8"/>
<circle cx="1287.0" cy="778.8" r="3.1" fill="#4a8fd0" stroke="#463f7a" stroke-width="1.8"/>
<circle cx="1135.1" cy="751.6" r="3.1" fill="#4a8fd0" stroke="#463f7a" stroke-width="1.8"/>
<circle cx="1202.1" cy="734.2" r="4.0" fill="#453d70"/>
<circle cx="876.0" cy="526.3" r="3.0" fill="#3d9fda" stroke="#4b6fb0" stroke-width="1"/>
<circle cx="873.8" cy="659.4" r="3.0" fill="#3d9fda" stroke="#4b6fb0" stroke-width="1"/>
<circle cx="877.0" cy="662.0" r="3.0" fill="#3d9fda" stroke="#4b6fb0" stroke-width="1"/>
<circle cx="966.3" cy="686.0" r="2.6" fill="#4a8fd0" stroke="#463f7a" stroke-width="1.8"/>
<circle cx="973.6" cy="682.8" r="2.5" fill="#ebe8f2" stroke="#453d70" stroke-width="1.9"/>
<circle cx="979.8" cy="715.2" r="2.6" fill="#4a8fd0" stroke="#463f7a" stroke-width="1.8"/>
<circle cx="956.7" cy="722.2" r="3.0" fill="#3d9fda" stroke="#4b6fb0" stroke-width="1"/>
<circle cx="929.9" cy="720.0" r="3.5" fill="#453d70"/>
<circle cx="935.8" cy="724.3" r="2.6" fill="#4a8fd0" stroke="#463f7a" stroke-width="1.8"/>
<circle cx="1009.8" cy="727.0" r="3.0" fill="#3d9fda" stroke="#4b6fb0" stroke-width="1"/>
<circle cx="1016.8" cy="734.0" r="2.5" fill="#ebe8f2" stroke="#453d70" stroke-width="1.9"/>
<circle cx="1010.2" cy="610.2" r="2.6" fill="#4a8fd0" stroke="#463f7a" stroke-width="1.8"/>
<circle cx="1076.2" cy="701.4" r="2.6" fill="#4a8fd0" stroke="#463f7a" stroke-width="1.8"/>
<circle cx="1231.6" cy="639.3" r="3.0" fill="#3d9fda" stroke="#4b6fb0" stroke-width="1"/>
<circle cx="1254.6" cy="660.2" r="3.5" fill="#4fc0e8" stroke="#a9e0f5" stroke-width="1"/>
<circle cx="1235.1" cy="681.4" r="2.5" fill="#ebe8f2" stroke="#453d70" stroke-width="1.9"/>
<circle cx="1233.0" cy="689.5" r="2.5" fill="#ebe8f2" stroke="#453d70" stroke-width="1.9"/>
<circle cx="1212.1" cy="685.6" r="3.0" fill="#3d9fda" stroke="#4b6fb0" stroke-width="1"/>
<circle cx="1251.0" cy="540.9" r="2.6" fill="#4a8fd0" stroke="#463f7a" stroke-width="1.8"/>
<circle cx="1299.8" cy="603.5" r="2.5" fill="#ebe8f2" stroke="#453d70" stroke-width="1.9"/>
<circle cx="1375.8" cy="582.3" r="3.0" fill="#3d9fda" stroke="#4b6fb0" stroke-width="1"/>
<circle cx="1368.8" cy="596.3" r="3.0" fill="#3d9fda" stroke="#4b6fb0" stroke-width="1"/>
<circle cx="1397.4" cy="610.2" r="2.6" fill="#4a8fd0" stroke="#463f7a" stroke-width="1.8"/>
<circle cx="1394.6" cy="651.4" r="2.6" fill="#4a8fd0" stroke="#463f7a" stroke-width="1.8"/>
<circle cx="1329.8" cy="679.3" r="2.5" fill="#ebe8f2" stroke="#453d70" stroke-width="1.9"/>
<circle cx="1444.6" cy="569.0" r="2.6" fill="#4a8fd0" stroke="#463f7a" stroke-width="1.8"/>
<circle cx="1429.0" cy="574.6" r="3.0" fill="#3d9fda" stroke="#4b6fb0" stroke-width="1"/>
<circle cx="1463.8" cy="675.2" r="3.5" fill="#453d70"/>
<circle cx="1329.9" cy="679.5" r="2.5" fill="#ebe8f2" stroke="#453d70" stroke-width="1.9"/>
<circle cx="1332.7" cy="690.0" r="2.6" fill="#4a8fd0" stroke="#463f7a" stroke-width="1.8"/>
<circle cx="1382.5" cy="697.9" r="2.5" fill="#ebe8f2" stroke="#453d70" stroke-width="1.9"/>
<circle cx="1408.3" cy="704.9" r="2.5" fill="#ebe8f2" stroke="#453d70" stroke-width="1.9"/>
<circle cx="1289.0" cy="702.5" r="2.6" fill="#4a8fd0" stroke="#463f7a" stroke-width="1.8"/>
<circle cx="1315.6" cy="770.7" r="2.5" fill="#ebe8f2" stroke="#453d70" stroke-width="1.9"/>
<circle cx="1260.9" cy="775.3" r="2.6" fill="#4a8fd0" stroke="#463f7a" stroke-width="1.8"/>
<circle cx="1409.0" cy="826.9" r="3.5" fill="#453d70"/>
<circle cx="1411.4" cy="833.6" r="3.0" fill="#3d9fda" stroke="#4b6fb0" stroke-width="1"/>
<circle cx="1184.9" cy="829.8" r="2.6" fill="#4a8fd0" stroke="#463f7a" stroke-width="1.8"/>
<circle cx="1232.8" cy="689.5" r="2.5" fill="#ebe8f2" stroke="#453d70" stroke-width="1.9"/>
<circle cx="1229.7" cy="700.7" r="2.5" fill="#ebe8f2" stroke="#453d70" stroke-width="1.9"/>
<circle cx="1193.0" cy="737.0" r="2.6" fill="#4a8fd0" stroke="#463f7a" stroke-width="1.8"/>
<circle cx="1199.7" cy="761.0" r="2.6" fill="#4a8fd0" stroke="#463f7a" stroke-width="1.8"/>
<circle cx="1179.8" cy="786.9" r="3.0" fill="#3d9fda" stroke="#4b6fb0" stroke-width="1"/>
<circle cx="1200.0" cy="787.2" r="2.5" fill="#ebe8f2" stroke="#453d70" stroke-width="1.9"/>
<circle cx="875.4" cy="466.8" r="2.2" fill="#4a8fd0" stroke="#463f7a" stroke-width="1.5"/>
<circle cx="879.3" cy="490.2" r="2.5" fill="#3d9fda" stroke="#4b6fb0" stroke-width="1"/>
<circle cx="876.0" cy="495.4" r="3.0" fill="#453d70"/>
<circle cx="928.8" cy="517.9" r="2.2" fill="#4a8fd0" stroke="#463f7a" stroke-width="1.5"/>
<circle cx="948.8" cy="561.0" r="2.2" fill="#ebe8f2" stroke="#453d70" stroke-width="1.7"/>
<circle cx="889.9" cy="645.8" r="2.5" fill="#3d9fda" stroke="#4b6fb0" stroke-width="1"/>
<circle cx="888.3" cy="649.8" r="3.0" fill="#453d70"/>
<circle cx="885.9" cy="655.4" r="3.0" fill="#453d70"/>
<circle cx="894.7" cy="662.7" r="3.0" fill="#453d70"/>
<circle cx="883.5" cy="664.3" r="2.5" fill="#3d9fda" stroke="#4b6fb0" stroke-width="1"/>
<circle cx="880.0" cy="657.0" r="2.2" fill="#4a8fd0" stroke="#463f7a" stroke-width="1.5"/>
<circle cx="910.0" cy="675.5" r="2.2" fill="#4a8fd0" stroke="#463f7a" stroke-width="1.5"/>
<circle cx="958.1" cy="705.9" r="3.0" fill="#453d70"/>
<circle cx="955.1" cy="716.3" r="3.0" fill="#453d70"/>
<circle cx="920.8" cy="714.7" r="2.5" fill="#3d9fda" stroke="#4b6fb0" stroke-width="1"/>
<circle cx="1081.4" cy="574.7" r="2.2" fill="#4a8fd0" stroke="#463f7a" stroke-width="1.5"/>
<circle cx="1059.0" cy="643.0" r="2.2" fill="#4a8fd0" stroke="#463f7a" stroke-width="1.5"/>
<circle cx="1079.8" cy="748.3" r="2.2" fill="#ebe8f2" stroke="#453d70" stroke-width="1.7"/>
<circle cx="1082.0" cy="752.0" r="2.5" fill="#3d9fda" stroke="#4b6fb0" stroke-width="1"/>
<circle cx="1205.1" cy="581.2" r="2.2" fill="#ebe8f2" stroke="#453d70" stroke-width="1.7"/>
<circle cx="1211.4" cy="603.3" r="2.5" fill="#3d9fda" stroke="#4b6fb0" stroke-width="1"/>
<circle cx="1180.7" cy="613.7" r="2.2" fill="#4a8fd0" stroke="#463f7a" stroke-width="1.5"/>
<circle cx="1242.1" cy="592.0" r="3.0" fill="#453d70"/>
<circle cx="1242.1" cy="595.0" r="3.0" fill="#453d70"/>
<circle cx="1245.6" cy="571.2" r="2.2" fill="#ebe8f2" stroke="#453d70" stroke-width="1.7"/>
<circle cx="1245.6" cy="667.2" r="2.2" fill="#ebe8f2" stroke="#453d70" stroke-width="1.7"/>
<circle cx="1212.6" cy="685.6" r="2.5" fill="#3d9fda" stroke="#4b6fb0" stroke-width="1"/>
<circle cx="1245.0" cy="537.3" r="2.5" fill="#3d9fda" stroke="#4b6fb0" stroke-width="1"/>
<circle cx="1291.0" cy="533.7" r="2.2" fill="#ebe8f2" stroke="#453d70" stroke-width="1.7"/>
<circle cx="1341.9" cy="572.7" r="2.2" fill="#4a8fd0" stroke="#463f7a" stroke-width="1.5"/>
<circle cx="1294.6" cy="572.6" r="2.5" fill="#3d9fda" stroke="#4b6fb0" stroke-width="1"/>
<circle cx="1313.4" cy="571.4" r="2.5" fill="#3d9fda" stroke="#4b6fb0" stroke-width="1"/>
<circle cx="1342.3" cy="572.3" r="2.2" fill="#4a8fd0" stroke="#463f7a" stroke-width="1.5"/>
<circle cx="1343.4" cy="584.8" r="2.2" fill="#4a8fd0" stroke="#463f7a" stroke-width="1.5"/>
<circle cx="1294.2" cy="613.7" r="2.2" fill="#4a8fd0" stroke="#463f7a" stroke-width="1.5"/>
<circle cx="1312.3" cy="583.7" r="2.5" fill="#3d9fda" stroke="#4b6fb0" stroke-width="1"/>
<circle cx="1307.4" cy="589.3" r="2.5" fill="#3d9fda" stroke="#4b6fb0" stroke-width="1"/>
<circle cx="1313.0" cy="593.5" r="2.5" fill="#3d9fda" stroke="#4b6fb0" stroke-width="1"/>
<circle cx="1320.7" cy="601.2" r="2.2" fill="#4a8fd0" stroke="#463f7a" stroke-width="1.5"/>
<circle cx="1299.8" cy="627.0" r="2.2" fill="#ebe8f2" stroke="#453d70" stroke-width="1.7"/>
<circle cx="1341.6" cy="627.0" r="2.2" fill="#ebe8f2" stroke="#453d70" stroke-width="1.7"/>
<circle cx="1341.6" cy="631.9" r="2.2" fill="#ebe8f2" stroke="#453d70" stroke-width="1.7"/>
<circle cx="1349.3" cy="604.6" r="2.5" fill="#3d9fda" stroke="#4b6fb0" stroke-width="1"/>
<circle cx="1355.6" cy="613.7" r="2.5" fill="#3d9fda" stroke="#4b6fb0" stroke-width="1"/>
<circle cx="1378.6" cy="623.5" r="2.2" fill="#4a8fd0" stroke="#463f7a" stroke-width="1.5"/>
<circle cx="1389.1" cy="606.7" r="2.5" fill="#3d9fda" stroke="#4b6fb0" stroke-width="1"/>
<circle cx="1282.3" cy="643.0" r="3.0" fill="#453d70"/>
<circle cx="1286.0" cy="643.0" r="3.0" fill="#453d70"/>
<circle cx="1290.0" cy="643.0" r="2.2" fill="#ebe8f2" stroke="#453d70" stroke-width="1.7"/>
<circle cx="1378.6" cy="686.3" r="2.2" fill="#ebe8f2" stroke="#453d70" stroke-width="1.7"/>
<circle cx="1383.5" cy="682.8" r="2.2" fill="#ebe8f2" stroke="#453d70" stroke-width="1.7"/>
<circle cx="1532.6" cy="563.4" r="2.2" fill="#4a8fd0" stroke="#463f7a" stroke-width="1.5"/>
<circle cx="1526.3" cy="577.7" r="2.5" fill="#3d9fda" stroke="#4b6fb0" stroke-width="1"/>
<circle cx="1521.4" cy="581.9" r="2.5" fill="#3d9fda" stroke="#4b6fb0" stroke-width="1"/>
<circle cx="1518.6" cy="584.6" r="2.5" fill="#3d9fda" stroke="#4b6fb0" stroke-width="1"/>
<circle cx="1508.8" cy="586.0" r="2.2" fill="#4a8fd0" stroke="#463f7a" stroke-width="1.5"/>
<circle cx="1522.0" cy="590.0" r="2.5" fill="#3d9fda" stroke="#4b6fb0" stroke-width="1"/>
<circle cx="1506.0" cy="593.0" r="2.5" fill="#3d9fda" stroke="#4b6fb0" stroke-width="1"/>
<circle cx="1482.0" cy="609.0" r="2.5" fill="#3d9fda" stroke="#4b6fb0" stroke-width="1"/>
<circle cx="1450.2" cy="620.2" r="2.2" fill="#4a8fd0" stroke="#463f7a" stroke-width="1.5"/>
<circle cx="1414.6" cy="616.0" r="2.5" fill="#3d9fda" stroke="#4b6fb0" stroke-width="1"/>
<circle cx="1453.0" cy="643.3" r="2.2" fill="#ebe8f2" stroke="#453d70" stroke-width="1.7"/>
<circle cx="1452.3" cy="648.1" r="2.2" fill="#ebe8f2" stroke="#453d70" stroke-width="1.7"/>
<circle cx="1427.9" cy="648.8" r="2.5" fill="#3d9fda" stroke="#4b6fb0" stroke-width="1"/>
<circle cx="1470.5" cy="649.1" r="2.5" fill="#3d9fda" stroke="#4b6fb0" stroke-width="1"/>
<circle cx="1446.0" cy="664.0" r="2.2" fill="#4a8fd0" stroke="#463f7a" stroke-width="1.5"/>
<circle cx="1403.4" cy="698.6" r="3.0" fill="#453d70"/>
<circle cx="1407.9" cy="705.0" r="2.2" fill="#ebe8f2" stroke="#453d70" stroke-width="1.7"/>
<circle cx="1416.7" cy="737.6" r="2.5" fill="#3d9fda" stroke="#4b6fb0" stroke-width="1"/>
<circle cx="1400.0" cy="748.3" r="2.5" fill="#3d9fda" stroke="#4b6fb0" stroke-width="1"/>
<circle cx="1393.6" cy="774.0" r="2.5" fill="#3d9fda" stroke="#4b6fb0" stroke-width="1"/>
<circle cx="1377.6" cy="686.0" r="2.2" fill="#ebe8f2" stroke="#453d70" stroke-width="1.7"/>
<circle cx="1353.2" cy="715.0" r="2.2" fill="#ebe8f2" stroke="#453d70" stroke-width="1.7"/>
<circle cx="1359.9" cy="734.9" r="2.2" fill="#4a8fd0" stroke="#463f7a" stroke-width="1.5"/>
<circle cx="1352.2" cy="741.8" r="2.5" fill="#3d9fda" stroke="#4b6fb0" stroke-width="1"/>
<circle cx="1417.0" cy="737.6" r="2.5" fill="#3d9fda" stroke="#4b6fb0" stroke-width="1"/>
<circle cx="1298.8" cy="773.2" r="2.2" fill="#4a8fd0" stroke="#463f7a" stroke-width="1.5"/>
<circle cx="1393.0" cy="773.9" r="2.5" fill="#3d9fda" stroke="#4b6fb0" stroke-width="1"/>
<circle cx="1405.5" cy="803.1" r="2.2" fill="#4a8fd0" stroke="#463f7a" stroke-width="1.5"/>
<circle cx="1410.2" cy="838.3" r="2.5" fill="#3d9fda" stroke="#4b6fb0" stroke-width="1"/>
<circle cx="1193.9" cy="810.9" r="2.5" fill="#3d9fda" stroke="#4b6fb0" stroke-width="1"/>
<circle cx="1184.5" cy="832.8" r="2.5" fill="#3d9fda" stroke="#4b6fb0" stroke-width="1"/>
<circle cx="1235.3" cy="681.4" r="2.2" fill="#ebe8f2" stroke="#453d70" stroke-width="1.7"/>
<circle cx="1193.7" cy="695.1" r="2.2" fill="#4a8fd0" stroke="#463f7a" stroke-width="1.5"/>
<circle cx="1138.6" cy="701.0" r="2.5" fill="#3d9fda" stroke="#4b6fb0" stroke-width="1"/>
<circle cx="1230.8" cy="759.6" r="2.5" fill="#3d9fda" stroke="#4b6fb0" stroke-width="1"/>
<circle cx="1219.5" cy="780.2" r="3.0" fill="#453d70"/>
<circle cx="1204.2" cy="798.4" r="2.2" fill="#ebe8f2" stroke="#453d70" stroke-width="1.7"/>
<circle cx="879.3" cy="482.5" r="2.0" fill="#3d9fda" stroke="#4b6fb0" stroke-width="1"/>
<circle cx="878.0" cy="485.7" r="2.0" fill="#3d9fda" stroke="#4b6fb0" stroke-width="1"/>
<circle cx="880.0" cy="492.0" r="2.0" fill="#3d9fda" stroke="#4b6fb0" stroke-width="1"/>
<circle cx="867.4" cy="515.7" r="2.5" fill="#453d70"/>
<circle cx="878.0" cy="527.0" r="2.0" fill="#3d9fda" stroke="#4b6fb0" stroke-width="1"/>
<circle cx="871.9" cy="584.6" r="1.9" fill="#4a8fd0" stroke="#463f7a" stroke-width="1.2"/>
<circle cx="881.8" cy="651.4" r="2.5" fill="#453d70"/>
<circle cx="888.3" cy="671.5" r="2.5" fill="#453d70"/>
<circle cx="897.1" cy="669.9" r="2.0" fill="#3d9fda" stroke="#4b6fb0" stroke-width="1"/>
<circle cx="885.9" cy="668.3" r="2.5" fill="#453d70"/>
<circle cx="921.3" cy="698.0" r="2.0" fill="#3d9fda" stroke="#4b6fb0" stroke-width="1"/>
<circle cx="918.6" cy="718.4" r="2.0" fill="#3d9fda" stroke="#4b6fb0" stroke-width="1"/>
<circle cx="919.2" cy="712.5" r="2.5" fill="#453d70"/>
<circle cx="1006.0" cy="730.2" r="2.5" fill="#453d70"/>
<circle cx="1097.4" cy="628.0" r="2.0" fill="#3d9fda" stroke="#4b6fb0" stroke-width="1"/>
<circle cx="1105.1" cy="628.0" r="2.5" fill="#453d70"/>
<circle cx="1203.0" cy="562.5" r="2.0" fill="#3d9fda" stroke="#4b6fb0" stroke-width="1"/>
<circle cx="1209.0" cy="600.0" r="2.0" fill="#3d9fda" stroke="#4b6fb0" stroke-width="1"/>
<circle cx="1306.7" cy="548.0" r="2.0" fill="#3d9fda" stroke="#4b6fb0" stroke-width="1"/>
<circle cx="1313.2" cy="545.6" r="2.0" fill="#3d9fda" stroke="#4b6fb0" stroke-width="1"/>
<circle cx="1305.0" cy="592.0" r="2.5" fill="#453d70"/>
<circle cx="1309.5" cy="621.4" r="2.0" fill="#3d9fda" stroke="#4b6fb0" stroke-width="1"/>
<circle cx="1336.7" cy="631.9" r="2.5" fill="#453d70"/>
<circle cx="1321.1" cy="631.9" r="2.0" fill="#3d9fda" stroke="#4b6fb0" stroke-width="1"/>
<circle cx="1372.0" cy="594.0" r="2.0" fill="#3d9fda" stroke="#4b6fb0" stroke-width="1"/>
<circle cx="1391.2" cy="601.2" r="2.0" fill="#3d9fda" stroke="#4b6fb0" stroke-width="1"/>
<circle cx="1295.6" cy="659.3" r="2.5" fill="#453d70"/>
<circle cx="1464.9" cy="607.0" r="2.0" fill="#3d9fda" stroke="#4b6fb0" stroke-width="1"/>
<circle cx="1457.2" cy="633.8" r="2.5" fill="#453d70"/>
<circle cx="1433.5" cy="655.8" r="1.9" fill="#4a8fd0" stroke="#463f7a" stroke-width="1.2"/>
<circle cx="1446.0" cy="663.5" r="2.5" fill="#453d70"/>
<circle cx="1352.5" cy="700.7" r="1.8" fill="#ebe8f2" stroke="#453d70" stroke-width="1.4"/>
<circle cx="1326.4" cy="726.5" r="2.0" fill="#3d9fda" stroke="#4b6fb0" stroke-width="1"/>
<circle cx="1282.1" cy="744.2" r="2.0" fill="#3d9fda" stroke="#4b6fb0" stroke-width="1"/>
<circle cx="1273.0" cy="770.7" r="2.0" fill="#3d9fda" stroke="#4b6fb0" stroke-width="1"/>
<circle cx="1383.6" cy="781.9" r="2.5" fill="#453d70"/>
<circle cx="1399.2" cy="789.2" r="2.5" fill="#453d70"/>
<circle cx="1400.0" cy="793.4" r="2.5" fill="#453d70"/>
<circle cx="1407.9" cy="843.1" r="2.5" fill="#453d70"/>
<circle cx="1391.2" cy="827.6" r="2.5" fill="#453d70"/>
<circle cx="1193.0" cy="834.2" r="2.5" fill="#453d70"/>
<circle cx="1378.9" cy="809.0" r="2.5" fill="#453d70"/>
<circle cx="1383.6" cy="808.6" r="2.0" fill="#3d9fda" stroke="#4b6fb0" stroke-width="1"/>
<circle cx="1137.2" cy="697.2" r="2.5" fill="#453d70"/>
<circle cx="1129.5" cy="750.6" r="1.8" fill="#ebe8f2" stroke="#453d70" stroke-width="1.4"/>
<circle cx="1216.3" cy="733.0" r="1.8" fill="#ebe8f2" stroke="#453d70" stroke-width="1.4"/>
<circle cx="1188.8" cy="777.4" r="1.9" fill="#4a8fd0" stroke="#463f7a" stroke-width="1.2"/>
<circle cx="1149.8" cy="787.2" r="2.5" fill="#453d70"/>
<circle cx="883.8" cy="493.4" r="2.0" fill="#453d70"/>
<circle cx="869.6" cy="536.8" r="2.0" fill="#453d70"/>
<circle cx="907.6" cy="678.4" r="1.5" fill="#3d9fda" stroke="#4b6fb0" stroke-width="1"/>
<circle cx="912.4" cy="677.2" r="2.0" fill="#453d70"/>
<circle cx="971.2" cy="689.2" r="2.0" fill="#453d70"/>
<circle cx="920.8" cy="698.4" r="1.5" fill="#3d9fda" stroke="#4b6fb0" stroke-width="1"/>
<circle cx="1101.6" cy="617.2" r="2.0" fill="#453d70"/>
<circle cx="1203.0" cy="610.2" r="2.0" fill="#453d70"/>
<circle cx="1169.5" cy="641.6" r="2.0" fill="#453d70"/>
<circle cx="1192.0" cy="660.0" r="2.0" fill="#453d70"/>
<circle cx="1233.0" cy="668.1" r="2.0" fill="#453d70"/>
<circle cx="1320.7" cy="597.7" r="2.0" fill="#453d70"/>
<circle cx="1341.0" cy="610.2" r="2.0" fill="#453d70"/>
<circle cx="1334.0" cy="610.2" r="2.0" fill="#453d70"/>
<circle cx="1331.9" cy="627.0" r="2.0" fill="#453d70"/>
<circle cx="1395.3" cy="604.6" r="1.5" fill="#3d9fda" stroke="#4b6fb0" stroke-width="1"/>
<circle cx="1320.7" cy="679.3" r="1.5" fill="#3d9fda" stroke="#4b6fb0" stroke-width="1"/>
<circle cx="1446.7" cy="693.6" r="2.0" fill="#453d70"/>
<circle cx="1401.3" cy="718.5" r="2.0" fill="#453d70"/>
<circle cx="1320.9" cy="679.5" r="1.5" fill="#3d9fda" stroke="#4b6fb0" stroke-width="1"/>
<circle cx="1327.8" cy="730.7" r="2.0" fill="#453d70"/>
<circle cx="1334.4" cy="742.8" r="1.5" fill="#3d9fda" stroke="#4b6fb0" stroke-width="1"/>
<circle cx="1409.0" cy="816.4" r="1.5" fill="#3d9fda" stroke="#4b6fb0" stroke-width="1"/>
<circle cx="1193.7" cy="700.7" r="1.5" fill="#3d9fda" stroke="#4b6fb0" stroke-width="1"/>
<circle cx="1186.0" cy="784.4" r="2.0" fill="#453d70"/>
<circle cx="1235.3" cy="780.2" r="2.0" fill="#4fc0e8" stroke="#a9e0f5" stroke-width="1"/>
<circle cx="1258.6" cy="706.3" r="1.5" fill="#453d70"/>
<rect x="810.4" y="444.2" width="29.8" height="58.6" rx="4" fill="#fff" stroke="#a6a6a6" stroke-width="1.7"/>
<line x1="811.3" y1="473.5" x2="839.3" y2="473.5" stroke="#e6e6e6" stroke-width="1"/>
<path d="M820.6 459 H829.6 M825.1 454.5 V463.5" stroke="#111" stroke-width="1.9"/>
<path d="M820.6 488 H829.6" stroke="#222" stroke-width="2"/>
<rect x="810" y="788" width="81.5" height="77.5" rx="3" fill="#e8eaeb" fill-opacity="0.95"/>
<g font-family="Liberation Sans" fill="#555"><text x="820.5" y="809.8" font-size="13.5">Gender</text><text x="835.5" y="831.8" font-size="13.5">Female</text><text x="835.5" y="854" font-size="13.5">Male</text></g>
<circle cx="825.8" cy="827.1" r="4.3" fill="#cfc9e0" stroke="#7d75a2" stroke-width="1.8"/>
<circle cx="825.8" cy="849.4" r="4.3" fill="#d3e8f5" stroke="#86cdee" stroke-width="1.8"/>
<circle cx="1575.2" cy="850.7" r="14" fill="#e9eaeb" fill-opacity="0.9"/>
<circle cx="1575.2" cy="850.7" r="7.8" fill="#111"/>
<rect x="1574.2" y="849" width="2.2" height="6" fill="#fff"/><circle cx="1575.3" cy="846.6" r="1.2" fill="#fff"/>
</svg>

</body></html>
